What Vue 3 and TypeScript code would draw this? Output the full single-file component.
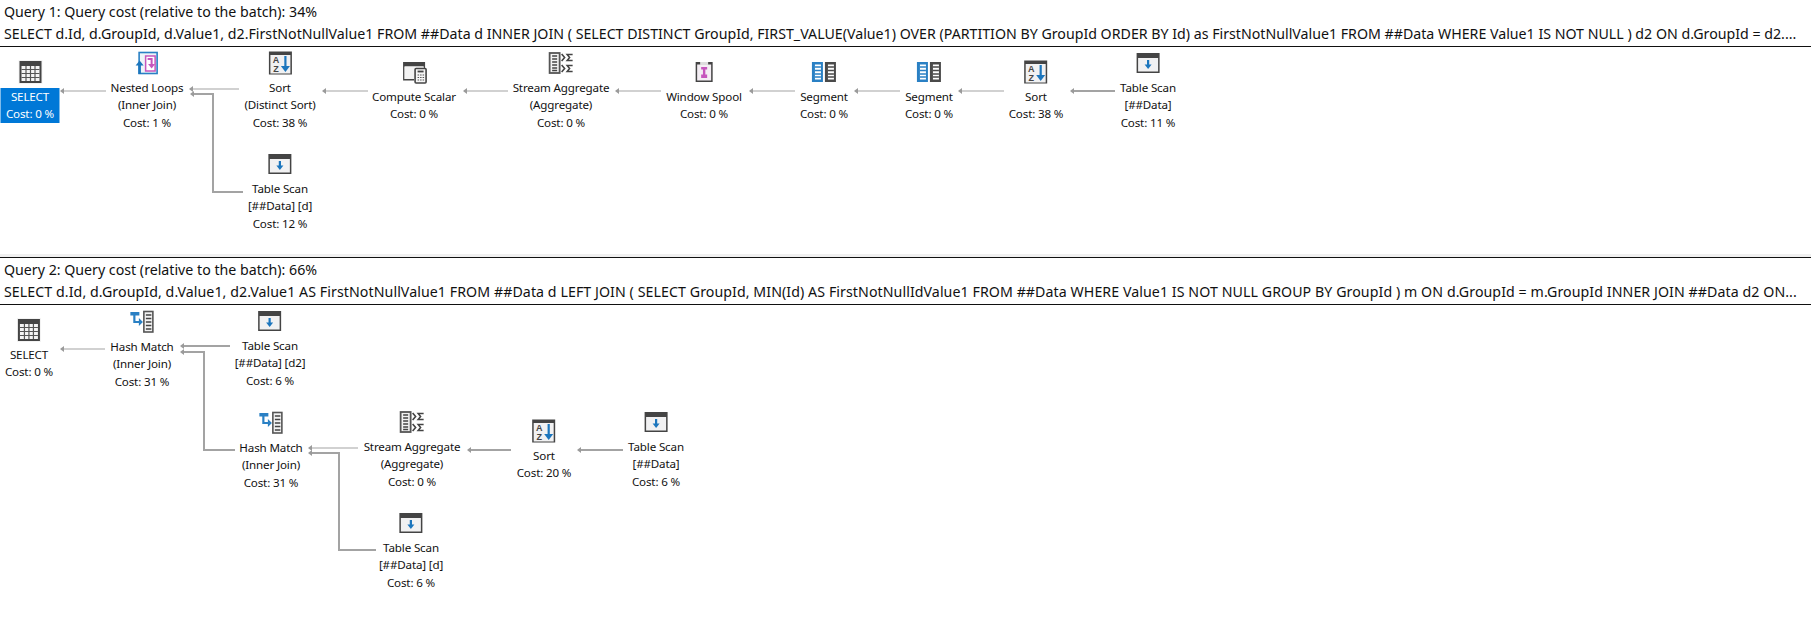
<script setup lang="ts">
type Kind = 'select' | 'loops' | 'sort' | 'compute' | 'stream' | 'spool' | 'segment' | 'scan' | 'hash'
interface PlanNode { kind: Kind; x: number; y: number; lines: string[]; selected?: boolean }
interface Edge { d: string; w: number; tipX: number; tipY: number }
interface Query { title: string; sql: string; top: number; height: number; nodes: PlanNode[]; edges: Edge[] }

function line(x1: number, y: number, x2: number, w = 1): Edge {
  return { d: `M${x1 + 3} ${y}H${x2}`, w, tipX: x1, tipY: y }
}
function elbow(x1: number, y1: number, xm: number, y2: number, x2: number, w = 2): Edge {
  return { d: `M${x1 + 3} ${y1}H${xm}V${y2}H${x2}`, w, tipX: x1, tipY: y1 }
}

const queries: Query[] = [
  {
    title: 'Query 1: Query cost (relative to the batch): 34%',
    sql: 'SELECT d.Id, d.GroupId, d.Value1, d2.FirstNotNullValue1 FROM ##Data d INNER JOIN ( SELECT DISTINCT GroupId, FIRST_VALUE(Value1) OVER (PARTITION BY GroupId ORDER BY Id) as FirstNotNullValue1 FROM ##Data WHERE Value1 IS NOT NULL ) d2 ON d.GroupId = d2....',
    top: 47,
    height: 207,
    nodes: [
      { kind: 'select', x: 30, y: 72, lines: ['SELECT', 'Cost: 0 %'], selected: true },
      { kind: 'loops', x: 147, y: 63, lines: ['Nested Loops', '(Inner Join)', 'Cost: 1 %'] },
      { kind: 'sort', x: 280, y: 63, lines: ['Sort', '(Distinct Sort)', 'Cost: 38 %'] },
      { kind: 'compute', x: 414, y: 72, lines: ['Compute Scalar', 'Cost: 0 %'] },
      { kind: 'stream', x: 561, y: 63, lines: ['Stream Aggregate', '(Aggregate)', 'Cost: 0 %'] },
      { kind: 'spool', x: 704, y: 72, lines: ['Window Spool', 'Cost: 0 %'] },
      { kind: 'segment', x: 824, y: 72, lines: ['Segment', 'Cost: 0 %'] },
      { kind: 'segment', x: 929, y: 72, lines: ['Segment', 'Cost: 0 %'] },
      { kind: 'sort', x: 1036, y: 72, lines: ['Sort', 'Cost: 38 %'] },
      { kind: 'scan', x: 1148, y: 63, lines: ['Table Scan', '[##Data]', 'Cost: 11 %'] },
      { kind: 'scan', x: 280, y: 164, lines: ['Table Scan', '[##Data] [d]', 'Cost: 12 %'] },
    ],
    edges: [
      line(60, 91, 106),
      line(189, 89, 239),
      elbow(190, 94, 213, 192, 243),
      line(322, 91, 368),
      line(463, 91, 508),
      line(615, 91, 661),
      line(749, 91, 795),
      line(854, 91, 900),
      line(958, 91, 1004),
      line(1070, 91, 1115, 2),
    ],
  },
  {
    title: 'Query 2: Query cost (relative to the batch): 66%',
    sql: 'SELECT d.Id, d.GroupId, d.Value1, d2.Value1 AS FirstNotNullValue1 FROM ##Data d LEFT JOIN ( SELECT GroupId, MIN(Id) AS FirstNotNullIdValue1 FROM ##Data WHERE Value1 IS NOT NULL GROUP BY GroupId ) m ON d.GroupId = m.GroupId INNER JOIN ##Data d2 ON...',
    top: 305,
    height: 314,
    nodes: [
      { kind: 'select', x: 29, y: 330, lines: ['SELECT', 'Cost: 0 %'] },
      { kind: 'hash', x: 142, y: 322, lines: ['Hash Match', '(Inner Join)', 'Cost: 31 %'] },
      { kind: 'scan', x: 270, y: 321, lines: ['Table Scan', '[##Data] [d2]', 'Cost: 6 %'] },
      { kind: 'hash', x: 271, y: 423, lines: ['Hash Match', '(Inner Join)', 'Cost: 31 %'] },
      { kind: 'stream', x: 412, y: 422, lines: ['Stream Aggregate', '(Aggregate)', 'Cost: 0 %'] },
      { kind: 'sort', x: 544, y: 431, lines: ['Sort', 'Cost: 20 %'] },
      { kind: 'scan', x: 656, y: 422, lines: ['Table Scan', '[##Data]', 'Cost: 6 %'] },
      { kind: 'scan', x: 411, y: 523, lines: ['Table Scan', '[##Data] [d]', 'Cost: 6 %'] },
    ],
    edges: [
      line(60, 349, 105),
      line(180, 346, 230, 2),
      elbow(180, 352, 204, 450, 235),
      line(308, 448, 358),
      elbow(308, 453, 339, 550, 376),
      line(467, 450, 511, 2),
      line(577, 450, 623, 2),
    ],
  },
]

function nodeStyle(n: PlanNode, top: number) {
  return { left: `${n.x}px`, top: `${n.y - 12 - top}px` }
}
function svgBox(q: Query) {
  return `0 ${q.top} 1811 ${q.height}`
}
</script>

<template>
  <div class="page">
    <section v-for="(q, qi) in queries" :key="qi" class="query" :class="{ first: qi === 0, last: qi === 1 }">
      <header class="head">
        <div class="head-line">{{ q.title }}</div>
        <div class="head-line sql">{{ q.sql }}</div>
      </header>
      <div class="canvas">
        <svg class="edges" width="1811" :height="q.height" :viewBox="svgBox(q)">
          <g v-for="(e, ei) in q.edges" :key="ei">
            <path :d="e.d" fill="none" stroke="#a3a3a3" :stroke-width="e.w" />
            <path :d="`M${e.tipX} ${e.tipY}l4 -3v6z`" fill="#9a9a9a" />
          </g>
        </svg>
        <div v-for="(n, ni) in q.nodes" :key="ni" class="node" :style="nodeStyle(n, q.top)">
          <svg class="icon" width="26" height="26" viewBox="0 0 26 26">
            <g v-if="n.kind === 'select'">
              <rect x="1" y="1" width="24" height="24" fill="#f3f3f3" />
              <rect x="2" y="2" width="22" height="22" fill="#444" />
              <rect x="4" y="7" width="18" height="15" fill="#f4f4f4" />
              <path d="M4 10.5H22M4 14.5H22M4 18.5H22M8.5 7V22M13 7V22M17.5 7V22" stroke="#555" stroke-width="1.2" />
            </g>
            <g v-else-if="n.kind === 'loops'">
              <rect x="5.500" y="2.500" width="18" height="21" fill="#eef4f9" stroke="#2a80c4" stroke-width="1.6" />
              <rect x="12" y="6" width="9.500" height="15" fill="#fff" stroke="#c656bd" stroke-width="1.5" />
              <path d="M14 9H18V15" fill="none" stroke="#c656bd" stroke-width="2" />
              <path d="M14.500 14H21.500L18 18.500Z" fill="#c656bd" />
              <path d="M6 24V14" stroke="#1c76bd" stroke-width="2.6" />
              <path d="M2 15.500L6 10.500L10 15.500Z" fill="#1c76bd" />
            </g>
            <g v-else-if="n.kind === 'sort'">
              <rect x="1.500" y="1.500" width="23" height="23" fill="#444" />
              <rect x="3" y="5" width="20" height="18.500" fill="#f1f1f2" />
              <text x="8.500" y="12.500" class="az">A</text>
              <text x="8.500" y="21.500" class="az">Z</text>
              <path d="M18 6V19" stroke="#1c76bd" stroke-width="2.2" />
              <path d="M13.500 16H22.500L18 22Z" fill="#1c76bd" />
            </g>
            <g v-else-if="n.kind === 'compute'">
              <path d="M2 3H24V10H22.500V7.500H3.500V20H13V21.500H2Z" fill="#444" />
              <rect x="3.500" y="7.500" width="19" height="12.500" fill="#f3f3f3" />
              <rect x="14" y="9.500" width="11" height="14.500" rx="1" fill="#f6f6f6" stroke="#444" stroke-width="1.6" />
              <path d="M16.500 12.500H22.500" stroke="#444" stroke-width="1.8" />
              <path d="M16.500 16h1.500M19 16h1.500M21.500 16h1.500M16.500 18.500h1.500M19 18.500h1.500M21.500 18.500h1.500M16.500 21h1.500M19 21h1.500M21.500 21h1.500" stroke="#555" stroke-width="1.2" />
            </g>
            <g v-else-if="n.kind === 'stream'">
              <rect x="2" y="3" width="10" height="20" fill="#f3f3f3" stroke="#555" stroke-width="1.8" />
              <path d="M4.500 6H9.500M4.500 9H9.500M4.500 12H9.500M4.500 15H9.500M4.500 18H9.500M4.500 20.500H9.500" stroke="#444" stroke-width="1.5" />
              <path d="M14 4L17 7.500L14 11M14 15L17 18.500L14 22" fill="none" stroke="#444" stroke-width="1.6" />
              <path d="M25 4.500H19.500L22 7.500L19.500 10.500H25M25 15.500H19.500L22 18.500L19.500 21.500H25" fill="none" stroke="#444" stroke-width="1.5" />
            </g>
            <g v-else-if="n.kind === 'spool'">
              <rect x="4.500" y="3" width="17" height="20" fill="#444" />
              <rect x="6" y="5.500" width="14" height="16" fill="#f4eef4" />
              <rect x="9" y="3" width="8" height="3" fill="#ddd" />
              <path d="M10 8H16V10.500H14.200V15.500H16V19H10V15.500H11.800V10.500H10Z" fill="#c656bd" />
            </g>
            <g v-else-if="n.kind === 'segment'">
              <rect x="1" y="3" width="11" height="20" fill="#2a80c4" />
              <rect x="4" y="5.500" width="6" height="15" fill="#fff" />
              <path d="M4 8H10M4 11.500H10M4 15H10M4 18H10" stroke="#2a80c4" stroke-width="1.4" />
              <rect x="14" y="3" width="11" height="20" fill="#4a4a4a" />
              <rect x="17" y="5.500" width="6" height="15" fill="#fff" />
              <path d="M17 8H23M17 11.500H23M17 15H23M17 18H23" stroke="#4a4a4a" stroke-width="1.4" />
            </g>
            <g v-else-if="n.kind === 'scan'">
              <rect x="1.500" y="3" width="23" height="20" fill="#444" />
              <rect x="3" y="8" width="20" height="13.500" fill="#f1f1f2" />
              <path d="M13 10V16" stroke="#1c76bd" stroke-width="2.2" />
              <path d="M9.500 14.500H16.500L13 19Z" fill="#1c76bd" />
            </g>
            <g v-else>
              <path d="M1 3H10V6.500H1Z" fill="#2a80c4" />
              <path d="M5 6V13H10" fill="none" stroke="#2a80c4" stroke-width="2.2" />
              <path d="M9.500 9L13.500 13L9.500 17Z" fill="#2a80c4" />
              <rect x="14.500" y="2.500" width="9" height="20.500" fill="#f3f3f3" stroke="#555" stroke-width="1.6" />
              <path d="M16.500 6H22M16.500 9.500H22M16.500 13H22M16.500 16.500H22M16.500 20H22" stroke="#444" stroke-width="1.6" />
            </g>
          </svg>
          <div class="label" :class="{ selected: n.selected }">
            <div v-for="(t, ti) in n.lines" :key="ti" class="label-line">{{ t }}</div>
          </div>
        </div>
      </div>
    </section>
  </div>
</template>

<style>
html, body { background: #fff; }
</style>

<style scoped>
.page {
  width: 1811px;
  height: 619px;
  display: flex;
  flex-direction: column;
  overflow: hidden;
  background: #fff;
  color: #111;
  font-family: "Noto Sans", "Open Sans", sans-serif;
}
.query {
  display: flex;
  flex-direction: column;
}
.query.first {
  height: 257px;
  flex: none;
  border-bottom: 3px solid #f0f0f0;
  box-sizing: border-box;
}
.query.last {
  flex: 1;
  min-height: 0;
  border-top: 1px solid #111;
}
.head {
  height: 45px;
  flex: none;
  border-bottom: 1px solid #111;
  padding: 1px 0 0 4px;
}
.head-line {
  height: 22px;
  line-height: 22px;
  font-size: 14.2px;
  white-space: nowrap;
  overflow: hidden;
}
.query.last .sql {
  letter-spacing: 0.07px;
}
.canvas {
  position: relative;
  flex: 1;
  min-height: 0;
}
.edges {
  position: absolute;
  left: 0;
  top: 0;
}
.node {
  position: absolute;
  transform: translateX(-50%);
  display: flex;
  flex-direction: column;
  align-items: center;
  white-space: nowrap;
}
.icon {
  display: block;
  margin-top: -1px;
}
.label {
  margin-top: 3px;
  text-align: center;
  font-size: 11.6px;
  letter-spacing: -0.15px;
}
.label-line {
  line-height: 17.4px;
  height: 17.4px;
}
.label.selected {
  background: #0078d7;
  color: #fff;
  width: 59px;
}
.az {
  font-family: "Liberation Sans", sans-serif;
  font-size: 9px;
  font-weight: 700;
  fill: #444;
  text-anchor: middle;
}
</style>
